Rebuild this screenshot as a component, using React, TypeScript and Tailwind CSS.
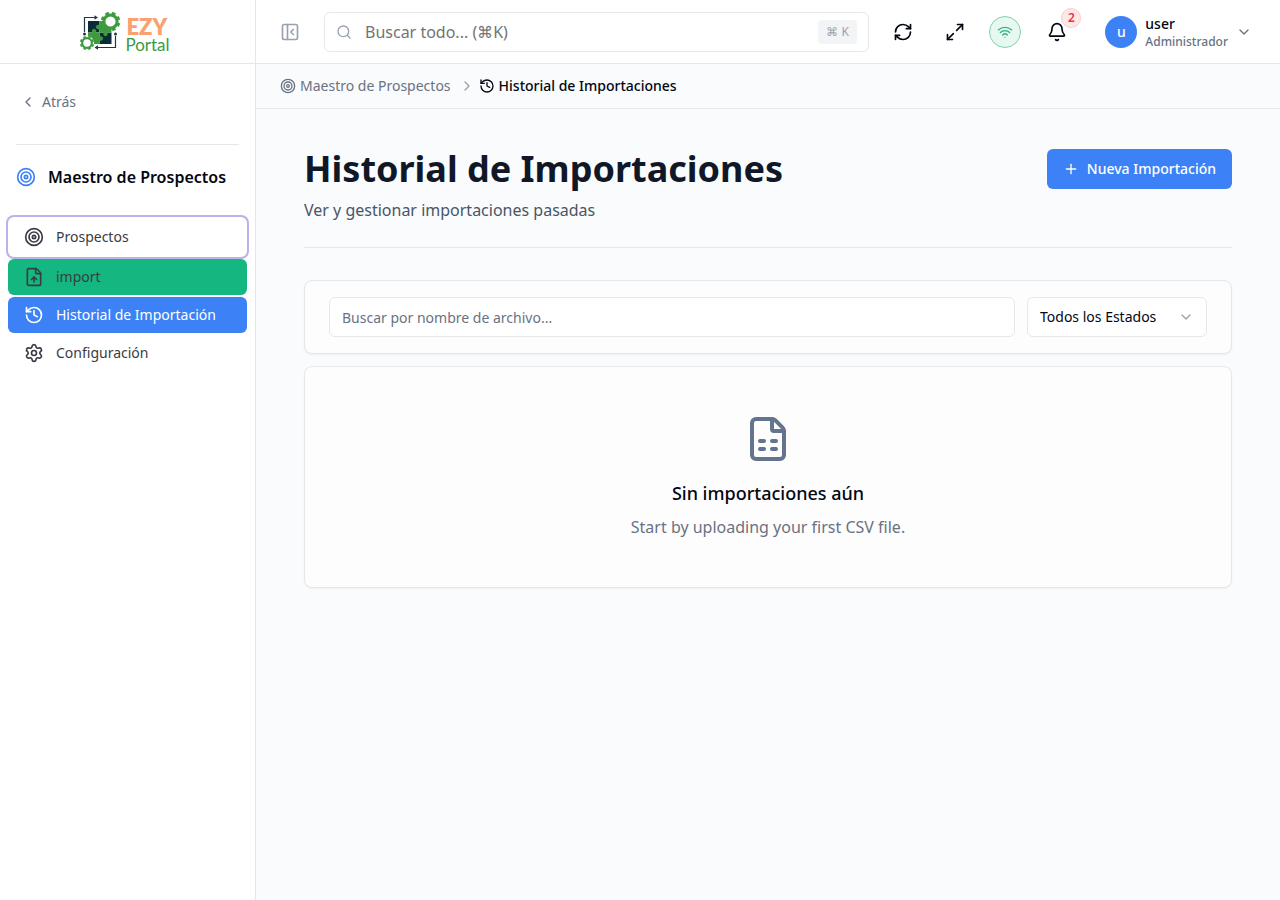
import {
  Bell,
  ChevronDown,
  ChevronLeft,
  ChevronRight,
  FileSpreadsheet,
  FileUp,
  History,
  Maximize2,
  PanelLeftClose,
  Plus,
  RefreshCw,
  Search,
  Settings,
  Target,
  Wifi,
} from "lucide-react";

const gearTeeth = [0, 45, 90, 135, 180, 225, 270, 315];

function Gear({ cx, cy, r }: { cx: number; cy: number; r: number }) {
  return (
    <g stroke="#3c9a3f" fill="none">
      <circle cx={cx} cy={cy} r={r} strokeWidth={r * 0.45} fill="#fff" />
      {gearTeeth.map((angle) => (
        <path
          key={angle}
          d={`M${cx} ${cy - r * 1.1}v${-r * 0.38}`}
          strokeWidth={r * 0.56}
          transform={`rotate(${angle + 22} ${cx} ${cy})`}
        />
      ))}
    </g>
  );
}

function Logo() {
  return (
    <a href="#" aria-label="EZY Portal" className="flex items-center">
      <svg viewBox="0 0 48 48" className="size-12" aria-hidden="true">
        <Gear cx={33.5} cy={13.5} r={6.6} />
        <Gear cx={10} cy={35} r={4.8} />
        <g fill="none" stroke="#1d3a45" strokeWidth="1.2">
          <path d="M7.500 24V9.500H18" />
          <path d="M38.500 28v11.500H20" />
        </g>
        <g fill="#1d3a45">
          <path d="M17.500 7.300 21 9.500l-3.500 2.200zM21 37.300 17.500 39.500l3.500 2.200z" />
          <circle cx="7.500" cy="26" r="1.500" />
          <circle cx="38.500" cy="26" r="1.500" />
        </g>
        <path d="M11 13h11.500v11.500H11z" fill="#0b2c36" />
        <path d="M22.500 24.500H34.500V36H22.500z" fill="#0b2c36" />
        <path
          d="M22.500 13h4a7 7 0 0 0 8 7.500v4h-4.300a2.200 2.200 0 1 1-3.400 0h-4.300v-3.800a2.200 2.200 0 1 1 0-3.400z"
          fill="#3c9a3f"
        />
        <path
          d="M11 24.500h4.300a2.200 2.200 0 1 1 3.400 0h3.800v4.300a2.200 2.200 0 1 1 0 3.400V36H17a7 7 0 0 0-6-8z"
          fill="#3c9a3f"
        />
      </svg>
      <span className="flex flex-col gap-px pt-2 font-['Lato',sans-serif]">
        <span className="pl-px text-[22px] leading-[18px] font-extrabold text-[#f9a270]">EZY</span>
        <span className="text-[17px] leading-4 text-[#3c9a3f]">Portal</span>
      </span>
    </a>
  );
}

const navItems = [
  { label: "Prospectos", icon: Target, style: "h-10 bg-white text-[#3a3c45] ring-2 ring-[#bab3e8]" },
  { label: "import", icon: FileUp, style: "h-9 bg-[#14b77f] text-[#3a3c45]" },
  { label: "Historial de Importación", icon: History, style: "h-9 bg-[#3c82f6] text-white" },
  { label: "Configuración", icon: Settings, style: "h-9 text-[#3a3c45]" },
];

function Sidebar() {
  return (
    <aside className="flex w-64 shrink-0 flex-col border-r border-gray-200 bg-white">
      <div className="flex h-16 shrink-0 items-center justify-center border-b border-gray-200 pr-2">
        <Logo />
      </div>
      <div className="px-4 pt-5">
        <button className="flex h-9 items-center gap-1.5 px-1 text-sm text-gray-500">
          <ChevronLeft className="size-4" />
          Atrás
        </button>
      </div>
      <hr className="mx-4 mt-6 border-gray-200" />
      <h2 className="flex h-16 items-center gap-3 px-4 font-semibold text-gray-950">
        <Target className="size-5 text-[#3c82f6]" />
        Maestro de Prospectos
      </h2>
      <nav className="flex flex-col gap-0.5 px-2 pt-2">
        {navItems.map(({ label, icon: Icon, style }) => (
          <a
            key={label}
            href="#"
            className={`flex items-center gap-3 rounded-md px-4 text-sm ${style}`}
          >
            <Icon className="size-5" />
            {label}
          </a>
        ))}
      </nav>
    </aside>
  );
}

function Header() {
  return (
    <header className="flex h-16 shrink-0 items-center border-b border-gray-200 bg-white pr-7 pl-6">
      <button aria-label="Contraer menú" className="mr-6 p-0 text-gray-400">
        <PanelLeftClose className="size-5" />
      </button>
      <label className="flex h-10 max-w-[545px] flex-1 items-center gap-[13px] rounded-md border border-gray-200 px-[11px]">
        <Search className="size-4 shrink-0 text-gray-400" />
        <input
          type="search"
          aria-label="Buscar todo"
          placeholder="Buscar todo... (⌘K)"
          className="min-w-0 flex-1 outline-none placeholder:text-neutral-500"
        />
        <kbd className="flex h-6 items-center rounded-sm bg-gray-100 px-2 font-['Noto_Sans',sans-serif] text-xs text-gray-400">
          ⌘ K
        </kbd>
      </label>
      <div className="ml-auto flex items-center gap-[18px] pl-4">
        <div className="flex items-center gap-5">
          <button aria-label="Actualizar" className="flex size-8 items-center justify-center">
            <RefreshCw className="size-5" />
          </button>
          <button aria-label="Pantalla completa" className="flex size-8 items-center justify-center">
            <Maximize2 className="size-5" />
          </button>
        </div>
        <div className="flex items-center gap-5">
          <button
            aria-label="Conexión"
            className="flex size-8 items-center justify-center rounded-full border border-[#7fd3ad] bg-[#e7f8f0] text-[#2fb27c]"
          >
            <Wifi className="size-4" />
          </button>
          <button aria-label="Notificaciones" className="relative flex size-8 items-center justify-center">
            <Bell className="size-5" />
            <span className="absolute -top-2 -right-2 flex size-5 items-center justify-center rounded-full border border-red-200 bg-[#fde8e8] text-xs font-semibold text-red-500">
              2
            </span>
          </button>
          <button className="ml-3 flex items-center gap-2 text-left">
            <span className="flex size-8 items-center justify-center rounded-full bg-[#3c82f6] text-sm font-medium text-white">
              u
            </span>
            <span className="flex flex-col">
              <span className="text-sm leading-5 font-medium">user</span>
              <span className="text-xs leading-4 font-medium text-gray-500">Administrador</span>
            </span>
            <ChevronDown className="size-4 text-gray-500" />
          </button>
        </div>
      </div>
    </header>
  );
}

function Breadcrumb() {
  return (
    <nav
      aria-label="Ruta"
      className="flex h-[45px] shrink-0 items-center border-b border-gray-200 px-6 text-sm"
    >
      <a href="#" className="flex items-center gap-1 text-gray-500">
        <Target className="size-4" />
        Maestro de Prospectos
      </a>
      <ChevronRight className="mr-1 ml-2 size-4 text-gray-400" />
      <span className="flex items-center gap-1 font-medium" aria-current="page">
        <History className="size-4" />
        Historial de Importaciones
      </span>
    </nav>
  );
}

export default function App() {
  return (
    <div className="flex min-h-screen bg-[#f9fbfd] font-['Noto_Sans',sans-serif] text-gray-950">
      <Sidebar />
      <div className="flex min-w-0 flex-1 flex-col">
        <Header />
        <Breadcrumb />
        <main className="flex flex-col px-12 pt-10">
          <div className="flex items-start justify-between border-b border-gray-200 pb-6">
            <div>
              <h1 className="text-4xl font-bold text-gray-900">Historial de Importaciones</h1>
              <p className="mt-2 leading-[26px] text-gray-600">Ver y gestionar importaciones pasadas</p>
            </div>
            <button className="flex h-10 items-center gap-2 rounded-md bg-[#3c82f6] px-4 text-sm font-medium text-white">
              <Plus className="size-4" />
              Nueva Importación
            </button>
          </div>
          <div className="mt-8 flex gap-3 rounded-lg border border-gray-200 bg-[#fdfdfd] px-6 py-4 shadow-xs">
            <input
              type="text"
              aria-label="Buscar por nombre de archivo"
              placeholder="Buscar por nombre de archivo..."
              className="h-10 min-w-0 flex-1 rounded-md border border-gray-200 bg-white px-3 text-sm placeholder:text-gray-500"
            />
            <div className="relative w-[180px]">
              <select
                aria-label="Estado"
                className="h-10 w-full appearance-none rounded-md border border-gray-200 bg-white px-3 text-sm"
              >
                <option>Todos los Estados</option>
              </select>
              <ChevronDown className="pointer-events-none absolute top-3 right-[13px] size-4 text-gray-400" />
            </div>
          </div>
          <section className="mt-3 flex flex-col items-center rounded-lg border border-gray-200 bg-[#fdfdfd] py-12 shadow-xs">
            <FileSpreadsheet className="size-12 text-slate-500" />
            <h3 className="mt-4 text-lg font-medium">Sin importaciones aún</h3>
            <p className="mt-2 text-gray-500">Start by uploading your first CSV file.</p>
          </section>
        </main>
      </div>
    </div>
  );
}
